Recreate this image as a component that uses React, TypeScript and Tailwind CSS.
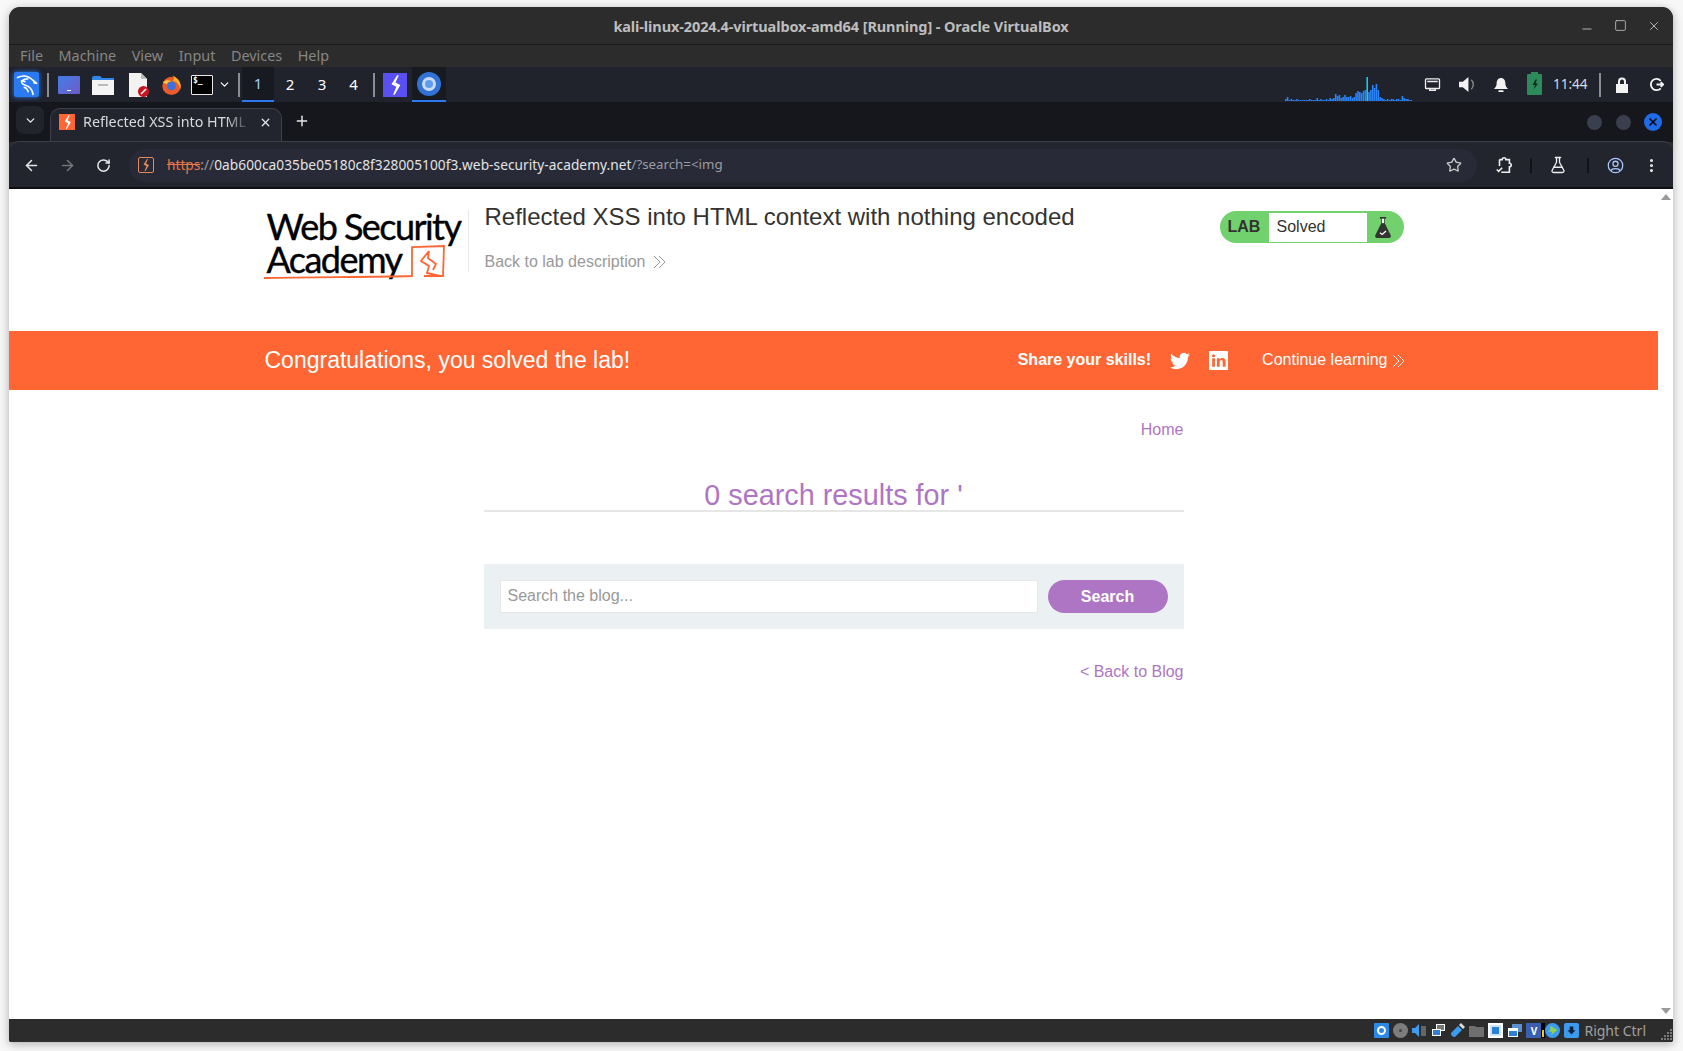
import React from 'react';
import { ArrowLeft, ArrowRight, ChevronDown, EllipsisVertical, FlaskConical, Plus, RotateCw, Star, X, Minus, Square } from 'lucide-react';

const graph = [2,4,1,2,1,1,2,1,1,1,1,1,1,2,1,1,1,3,1,2,1,1,2,1,3,2,3,7,5,6,3,4,6,4,4,5,3,4,8,10,9,8,10,11,24,9,11,16,13,17,11,4,3,2,1,2,1,2,2,1,2,2,1,5,3,2,2,1,1];

const Lightning = ({ className }: { className?: string }) => (
  <svg viewBox="0 0 16 24" className={className} fill="currentColor">
    <path d="M10 0 L3 11 L9 14 L5 24 L7 24 L14 12 L8 9 L12 0 Z" />
  </svg>
);

const Bolt = ({ className }: { className?: string }) => (
  <svg viewBox="0 0 24 24" className={className}>
    <path d="M13 2 L7 13 L12 13 L9 22 L18 10 L13 10 L16 2 Z" fill="currentColor" />
  </svg>
);

const Chevrons = ({ className }: { className?: string }) => (
  <svg viewBox="0 0 13 14" className={`w-[13px] h-[14px] ${className ?? ''}`} fill="none" stroke="currentColor" strokeWidth="1">
    <path d="M1 1 L7 7 L1 13 M6 1 L12 7 L6 13" />
  </svg>
);

const Logo = () => (
  <div className="relative w-[203px] h-[70px] font-['Lato',sans-serif] text-black">
    <div className="text-[36px] leading-[33px] font-normal tracking-[-1.55px] pl-[3px] whitespace-nowrap" style={{ WebkitTextStroke: '0.4px black' }}>
      <div>Web Security</div>
      <div>Academy</div>
    </div>
    <svg viewBox="0 0 203 70" className="absolute left-0 top-0 w-[203px] h-[70px] text-[#ff6633]" fill="none" stroke="currentColor">
      <path d="M0 68 C50 67 110 67 148 66 L148 37 L180 36 L179 66 L160 66" strokeWidth="1.8" />
      <path d="M165 41 L157 51 L165 56 L163 63 L176 66 M165 41 L164 48 L172 54 L169 60" strokeWidth="1.8" />
    </svg>
  </div>
);

const Flask = () => (
  <svg viewBox="0 0 20 24" className="w-[18px] h-[21px]">
    <rect x="6.500" y="0" width="7" height="2" fill="#333332" />
    <path d="M8 2 h4 v5 l7 14 q0 3 -2 3 h-14 q-2 0 -2 -3 l7 -14 z" fill="#333332" />
    <rect x="8.800" y="2" width="2.400" height="5" fill="#fff" />
    <path d="M6.500 18 l2.500 2 l4.500 -4" fill="none" stroke="#fff" strokeWidth="1.4" />
  </svg>
);

const Twitter = () => (
  <svg viewBox="0 0 24 24" className="w-[20px] h-[20px]" fill="#fff">
    <path d="M23.95 4.57a10 10 0 0 1-2.82.77 4.96 4.96 0 0 0 2.16-2.72c-.95.55-2 .95-3.12 1.18a4.92 4.92 0 0 0-8.38 4.48C7.69 8.1 4.07 6.13 1.64 3.16a4.82 4.82 0 0 0-.67 2.48c0 1.71.87 3.2 2.19 4.1a4.9 4.9 0 0 1-2.23-.62v.06a4.92 4.92 0 0 0 3.95 4.83 5 5 0 0 1-2.21.08 4.94 4.94 0 0 0 4.6 3.42A9.87 9.87 0 0 1 0 19.54a14 14 0 0 0 7.56 2.21c9.05 0 14-7.5 14-13.98 0-.21 0-.42-.02-.63a9.94 9.94 0 0 0 2.41-2.57z" />
  </svg>
);

const LinkedIn = () => (
  <svg viewBox="0 0 24 24" className="w-[19px] h-[19px]" fill="#fff">
    <path fillRule="evenodd" d="M1 0h22a1 1 0 0 1 1 1v22a1 1 0 0 1-1 1H1a1 1 0 0 1-1-1V1a1 1 0 0 1 1-1zM4 9v11h3.5V9zM5.75 4a2 2 0 1 0 0 4 2 2 0 0 0 0-4zM10 9v11h3.5v-6c0-1.6.7-2.5 2-2.5s1.8.9 1.8 2.5v6H21v-6.8c0-3-1.5-4.5-3.8-4.5-1.8 0-3 .9-3.6 2V9z" />
  </svg>
);

const TitleBar = () => (
  <div className="relative h-[38px] shrink-0 bg-[#2c2c2c] border-b border-[#1b1b1b] rounded-t-[11px] flex items-center justify-center">
    <span className="pt-[2px] text-[14.5px] font-bold text-[#bdbdbd] font-['Noto_Sans',sans-serif] tracking-[-0.1px]">kali-linux-2024.4-virtualbox-amd64 [Running] - Oracle VirtualBox</span>
    <div className="absolute right-[12px] top-0 h-full flex items-center gap-[20px] text-[#d0d0d0]">
      <Minus size={14} strokeWidth={1.4} className="translate-y-[3px]" />
      <Square size={13} strokeWidth={1.4} />
      <X size={14} strokeWidth={1.4} />
    </div>
  </div>
);

const MenuBar = () => (
  <div className="h-[22px] shrink-0 bg-[#2c2c2c] flex items-center gap-[15.5px] pl-[11px] text-[14.4px] text-[#868686] font-['Noto_Sans',sans-serif]">
    {['File', 'Machine', 'View', 'Input', 'Devices', 'Help'].map(m => <span key={m}>{m}</span>)}
  </div>
);

const PanelSep = ({ className }: { className?: string }) => <div className={`w-[2px] h-[24px] bg-[#8c8d92] shrink-0 ${className ?? ''}`} />;

const KaliPanel = () => (
  <div className="h-[35px] shrink-0 bg-[#20222c] flex items-center relative text-white">
    <div className="w-[25px] h-[25px] ml-[5px] rounded-[2px] bg-[#2a7bf2] shadow-[0_0_5px_#2a7bf2] flex items-center justify-center">
      <svg viewBox="0 0 24 24" className="w-[23px] h-[23px]" fill="none" stroke="#fff" strokeWidth="1.6">
        <path d="M2 5 C8 2 14 3 18 7 L23 11 L19 10 M14 6 C7 6 5 10 9 12 C15 14 18 16 19 23 M6 8 L11 9 M9 15 C11 15 13 17 14 20" />
      </svg>
    </div>
    <PanelSep className="ml-[8px]" />
    <div className="w-[22px] h-[18px] ml-[9px] rounded-[1px] bg-gradient-to-br from-[#3d7de6] to-[#6a5ac8] flex items-end justify-center">
      <span className="w-[4px] h-[1px] mb-[3px] bg-white" />
    </div>
    <svg viewBox="0 0 22 20" className="w-[22px] h-[20px] ml-[12px]">
      <path d="M0 3 q0 -2 2 -2 h6 l2 2 h12 v3 H0z" fill="#2f86e6" />
      <rect x="0" y="5" width="22" height="15" fill="#f4f4f4" />
      <rect x="6" y="9" width="10" height="2" fill="#bbb" />
    </svg>
    <svg viewBox="0 0 22 24" className="w-[22px] h-[24px] ml-[14px]">
      <path d="M1 0 h12 l6 6 v18 H1z" fill="#f2f2f2" />
      <path d="M13 0 l6 6 h-6z" fill="#bbb" />
      <circle cx="15.500" cy="18.500" r="5.500" fill="#c8141e" />
      <path d="M13 21 l5 -5" stroke="#fff" strokeWidth="1.6" />
    </svg>
    <svg viewBox="0 0 24 24" className="w-[21px] h-[22px] ml-[11px]">
      <circle cx="12" cy="13" r="10.500" fill="#ee5a2a" />
      <circle cx="12" cy="13" r="5" fill="#3b72e0" />
      <path d="M13 1 C20 4 24 10 22 17 C21 11 18 8 13 7 C16 5 15 3 13 1z" fill="#ffb028" />
      <path d="M2 9 C5 6 9 6 12 8 C8 8 7 10 7 11z" fill="#ffc53a" />
    </svg>
    <div className="w-[22px] h-[20px] ml-[9px] bg-black border border-[#e8e8e8] rounded-[1px] text-[8px] leading-[9px] pl-[1px] font-['DejaVu_Sans_Mono',monospace] font-bold">$_</div>
    <ChevronDown size={13} strokeWidth={2.2} className="ml-[5px]" />
    <PanelSep className="ml-[7px]" />
    <div className="ml-[2px] flex h-full items-center text-[15px] font-['Noto_Sans',sans-serif]">
      <span className="w-[32px] h-full flex items-center justify-center bg-[#181a22] border-b-2 border-[#2a7bf2] text-[#9fd0ff]">1</span>
      <span className="w-[32px] text-center">2</span>
      <span className="w-[32px] text-center">3</span>
      <span className="w-[31px] text-center">4</span>
    </div>
    <PanelSep className="ml-[4px]" />
    <div className="w-[24px] h-[24px] ml-[8px] bg-[#5a4ff0] flex items-center justify-center text-white"><Lightning className="w-[13px] h-[20px]" /></div>
    <div className="w-[34px] h-full ml-[5px] bg-[#181a22] border-b-2 border-[#2a7bf2] flex items-center justify-center">
      <div className="w-[24px] h-[24px] rounded-full bg-[#3272d6] flex items-center justify-center">
        <div className="w-[14px] h-[14px] rounded-full bg-[#5f9cec] border-[3px] border-[#c9dcf7]" />
      </div>
    </div>
    <svg viewBox="0 0 127 25" className="absolute left-[1276px] bottom-[1px] w-[127px] h-[25px]" fill="#2a84f5">
      {graph.map((h, i) => <rect key={i} x={i * 1.85} y={25 - h} width="1.6" height={h} fill={i === 44 ? '#12c8f5' : '#2a84f5'} />)}
    </svg>
    <div className="ml-auto flex items-center mr-[9px]">
      <svg viewBox="0 0 18 16" className="w-[17px] h-[14px]" fill="none" stroke="#eee" strokeWidth="1.5">
        <rect x="1" y="1" width="16" height="11" rx="1" />
        <path d="M3 4h12M5 14h8M6 12v2M12 12v2" />
      </svg>
      <svg viewBox="0 0 20 18" className="w-[19px] h-[17px] ml-[17px]">
        <path d="M1 6 h4 l6 -5 v16 l-6 -5 h-4z" fill="#f2f2f2" />
        <path d="M14 4 a7 7 0 0 1 0 10" fill="none" stroke="#888" strokeWidth="1.5" />
      </svg>
      <svg viewBox="0 0 16 18" className="w-[14px] h-[16px] ml-[17px]" fill="#f2f2f2">
        <path d="M8 1 c-3 0 -5 2.500 -5 6 c0 4 -2 5 -3 6.500 h16 c-1 -1.500 -3 -2.500 -3 -6.500 c0 -3.500 -2 -6 -5 -6z" />
        <rect x="5" y="15" width="6" height="2" rx="1" />
      </svg>
      <div className="relative ml-[19px] w-[15px] h-[21px] rounded-[1px] bg-[#2d8a5a] flex items-center justify-center">
        <span className="absolute -top-[2px] left-[4px] w-[7px] h-[2px] bg-[#2d8a5a]" />
        <Bolt className="w-[12px] h-[13px] text-[#0f2a1c]" />
      </div>
      <span className="ml-[11px] text-[13.5px] text-[#d7dbe0] font-['Noto_Sans',sans-serif] w-[35px]">11:44</span>
      <PanelSep className="ml-[11px]" />
      <svg viewBox="0 0 14 16" className="w-[14px] h-[16px] ml-[14px]" fill="#f2f2f2">
        <path fillRule="evenodd" d="M3 7 V4.500 a4 4 0 0 1 8 0 V7 h2 v9 H1 V7z M5 7 h4 V4.500 a2 2 0 0 0 -4 0z" />
      </svg>
      <svg viewBox="0 0 16 16" className="w-[15px] h-[15px] ml-[20px]" fill="none" stroke="#f2f2f2" strokeWidth="2">
        <path d="M12.500 4 A6 6 0 1 0 12.500 12 M8 8 h7 M12.500 5.500 L15 8 L12.500 10.500" />
      </svg>
    </div>
  </div>
);

const TabStrip = () => (
  <div className="h-[40px] shrink-0 bg-[#16171d] flex items-end relative">
    <div className="absolute left-[7px] top-[4px] w-[28px] h-[28px] rounded-[8px] bg-[#22242c] flex items-center justify-center text-[#e6e6e6]">
      <ChevronDown size={13} strokeWidth={2.6} />
    </div>
    <div className="ml-[41px] w-[232px] h-[34px] bg-[#22242e] border border-b-0 border-[#3d3f4b] rounded-t-[10px] flex items-center pl-[8px] pr-[9px] pb-[9px] pt-[2px]">
      <div className="w-[16px] h-[16px] bg-[#ff6633] flex items-center justify-center text-white shrink-0"><Lightning className="w-[9px] h-[14px]" /></div>
      <span className="ml-[8px] text-[14.3px] text-[#d8dade] font-['Noto_Sans',sans-serif] whitespace-nowrap overflow-hidden flex-1 [mask-image:linear-gradient(to_right,#000_85%,transparent)]">Reflected XSS into HTML</span>
      <X size={13} strokeWidth={2.4} className="ml-[8px] text-[#e6e6e6] shrink-0" />
    </div>
    <Plus size={16} strokeWidth={2.2} className="ml-[12px] mb-[13px] text-[#e6e6e6]" />
    <div className="absolute right-[11px] top-[11px] flex items-center gap-[12px]">
      <span className="w-[17px] h-[17px] rounded-full bg-[#3a3f4d] border border-[#14151a]" />
      <span className="w-[17px] h-[17px] rounded-full bg-[#3a3f4d] border border-[#14151a]" />
      <span className="w-[18px] h-[18px] rounded-full bg-[#1f6ce8] flex items-center justify-center"><X size={12} strokeWidth={3.5} className="text-[#0a0a14]" /></span>
    </div>
  </div>
);

const Toolbar = () => (
  <div className="h-[48px] shrink-0 bg-[#22242e] border-t border-[#3d3f4b] rounded-t-[10px] -mt-[1px] pt-[1px] flex items-center relative z-10 border-b-2 border-b-[#0e0f13]">
    <ArrowLeft size={17} strokeWidth={2.2} className="ml-[14px] text-[#e6e6e6]" />
    <ArrowRight size={17} strokeWidth={2.2} className="ml-[19px] text-[#73757c]" />
    <RotateCw size={15} strokeWidth={2.4} className="ml-[20px] text-[#e6e6e6]" />
    <div className="ml-[18px] w-[1348px] h-[33px] rounded-full bg-[#282b37] flex items-center pl-[9px] pr-[15px] font-['Noto_Sans',sans-serif] text-[13.7px]">
      <div className="w-[16px] h-[16px] border border-[#e8875a] rounded-[2px] flex items-center justify-center text-[#e8875a]"><Lightning className="w-[8px] h-[12px]" /></div>
      <span className="ml-[13px] text-[#e8764a] line-through">https</span>
      <span className="text-[#9a9ca3]">://</span>
      <span className="text-[#e2e3e6] tracking-[0.05px]">0ab600ca035be05180c8f328005100f3.web-security-academy.net</span>
      <span className="text-[#9a9ca3] text-[13.3px]">/?search=&lt;img</span>
      <Star size={16} strokeWidth={2} className="ml-auto text-[#c8c8c8]" />
    </div>
    <svg viewBox="0 0 20 20" className="w-[18px] h-[18px] ml-[18px]" fill="none" stroke="#eee" strokeWidth="1.8">
      <path d="M5 4 h3 a2 2 0 0 1 4 0 h4 v4 a2 2 0 0 1 0 4 v6 H7 M5 4 v7 M2 15 l2 2 l4 -4" />
    </svg>
    <div className="w-[2px] h-[15px] bg-[#111218] ml-[17px]" />
    <FlaskConical size={18} strokeWidth={1.8} className="ml-[17px] text-[#eee]" />
    <div className="w-[2px] h-[15px] bg-[#111218] ml-[20px]" />
    <svg viewBox="0 0 20 20" className="w-[17px] h-[17px] ml-[18px]" fill="none" stroke="#a9c7fa" strokeWidth="1.5">
      <circle cx="10" cy="10" r="8.500" />
      <circle cx="10" cy="8" r="3" />
      <path d="M4.500 16 c1.500 -3 9.500 -3 11 0" />
    </svg>
    <EllipsisVertical size={17} strokeWidth={2.4} className="ml-[19px] text-[#e6e6e6]" />
  </div>
);

const Scrollbar = () => (
  <div className="w-[15px] shrink-0 bg-white flex flex-col items-center justify-between py-[5px] pl-[1px]">
    <span className="w-0 h-0 border-x-[5px] border-x-transparent border-b-[6px] border-b-[#9b9b9b]" />
    <span className="w-0 h-0 border-x-[5px] border-x-transparent border-t-[6px] border-t-[#9b9b9b]" />
  </div>
);

const Page = () => (
  <div className="flex-1 min-h-0 flex bg-white font-['Liberation_Sans',sans-serif]">
    <div className="flex-1 min-w-0">
      <section className="h-[142px] w-[1140px] mx-auto flex items-start pt-[21px]">
        <Logo />
        <div className="w-px h-[62px] bg-[#e6e6e6] ml-[1px]" />
        <div className="ml-[16px] flex-1 -mt-[9px]">
          <h2 className="text-[24px] leading-[32px] text-[#333332]">Reflected XSS into HTML context with nothing encoded</h2>
          <div className="mt-[20px] flex items-center text-[16px] leading-[18px] text-[#999]">
            Back to lab description
            <Chevrons className="ml-[8px] text-[#999]" />
          </div>
        </div>
        <div className="mt-[1px] w-[184px] h-[32px] rounded-full bg-[#70d16d] flex items-center overflow-hidden shrink-0">
          <span className="w-[49px] pl-[8px] text-[16px] font-bold text-[#333332]">LAB</span>
          <span className="w-[98px] h-[29px] bg-white pl-[8px] text-[16px] leading-[28px] text-[#333332]">Solved</span>
          <span className="flex-1 flex justify-center pr-[4px]"><Flask /></span>
        </div>
      </section>
      <section className="h-[59px] bg-[#ff6633] text-white">
        <div className="w-[1140px] h-full mx-auto flex items-center">
          <h4 className="text-[23px] ml-[1px]">Congratulations, you solved the lab!</h4>
          <span className="ml-auto text-[16px] font-bold -translate-y-px">Share your skills!</span>
          <span className="ml-[19px]"><Twitter /></span>
          <span className="ml-[19px]"><LinkedIn /></span>
          <span className="ml-[34px] text-[16px] -translate-y-px">Continue learning</span>
          <Chevrons className="ml-[4px] -mr-[1px]" />
        </div>
      </section>
      <section className="w-[700px] mx-auto text-[#ae75c5] text-[16px]">
        <div className="pt-[31px] text-right leading-[18px]">Home</div>
        <h1 className="mt-[39px] h-[34px] text-center text-[28.8px] leading-[35px] border-b-2 border-[#e6e6e6] text-[#ae75c5]">0 search results for '</h1>
        <div className="mt-[52px] h-[65px] bg-[#ebf0f2] flex items-center pl-[16px] pr-[16px]">
          <div className="w-[538px] h-[33px] bg-white border border-[#e6e6e6] pl-[7px] leading-[29px] text-[#999]">Search the blog...</div>
          <button className="ml-[10px] w-[120px] h-[33px] rounded-full bg-[#ae75c5] text-white font-bold leading-[30px]">Search</button>
        </div>
        <div className="mt-[34px] text-right leading-[18px]">&lt; Back to Blog</div>
      </section>
    </div>
    <Scrollbar />
  </div>
);

const Sq = ({ className, children }: { className?: string; children?: React.ReactNode }) => (
  <div className={`w-[15px] h-[15px] shrink-0 flex items-center justify-center ${className ?? ''}`}>{children}</div>
);

const StatusBar = () => (
  <div className="h-[23px] shrink-0 bg-[#2c2c2c] rounded-b-[2px] flex items-center justify-end relative pr-[27px]">
    <div className="flex items-center gap-[4px]">
      <Sq className="bg-[#2a8ae6] rounded-[1px]"><span className="w-[9px] h-[9px] rounded-full border-2 border-white" /></Sq>
      <Sq className="bg-[#7d7d7d] rounded-full"><span className="w-[3px] h-[3px] rounded-full bg-[#444]" /></Sq>
      <Sq><svg viewBox="0 0 15 15" className="w-[15px] h-[15px]"><path d="M0 5h3l4-4v13l-4-4H0z" fill="#3d9bef" /><rect x="9" y="3" width="5" height="10" fill="#666" /></svg></Sq>
      <Sq><svg viewBox="0 0 15 15" className="w-[15px] h-[15px]"><rect x="5" y="1" width="9" height="7" fill="#fff" /><rect x="6" y="2" width="7" height="5" fill="#777" /><rect x="1" y="6" width="9" height="7" fill="#fff" /><rect x="2" y="7" width="7" height="5" fill="#2f7fd6" /></svg></Sq>
      <Sq><svg viewBox="0 0 15 15" className="w-[15px] h-[15px]"><path d="M1 10 L8 3 L12 7 L5 14 Q1 14 1 10z" fill="#3d9bef" /><path d="M9 2 L11 0 L15 4 L13 6z" fill="#ddd" /></svg></Sq>
      <Sq><svg viewBox="0 0 15 15" className="w-[15px] h-[15px]"><path d="M0 3h6l1 1h8v10H0z" fill="#6f6f6f" /></svg></Sq>
      <Sq className="bg-[#fff] p-[2px]"><span className="w-full h-full bg-[#2a7fd6] border-2 border-[#cfe3f7]" /></Sq>
      <Sq><svg viewBox="0 0 15 15" className="w-[15px] h-[15px]"><rect x="5" y="1" width="10" height="8" fill="#5b8fd0" /><rect x="1" y="5" width="10" height="9" fill="#fff" /><rect x="2" y="8" width="8" height="5" fill="#2a7fd6" /></svg></Sq>
      <Sq className="bg-[#3a5fb0] text-white text-[10px] font-bold leading-none relative">V<span className="absolute -right-[4px] top-0 w-[4px] h-[15px] bg-black"><span className="absolute bottom-[1px] left-[1px] w-[2px] h-[7px] bg-[#f2c811]" /></span></Sq>
      <Sq className="bg-[#3d9bef] rounded-full"><svg viewBox="0 0 15 15" className="w-[13px] h-[13px]"><path d="M5 2 l8 5 l-7 6 l1 -4 H3 l2 -3z" fill="#8fd14f" /></svg></Sq>
      <Sq className="bg-[#3d9bef] rounded-[2px]"><svg viewBox="0 0 15 15" className="w-[11px] h-[11px]"><path d="M5 2h5v5h3l-5.500 6L2 7h3z" fill="#12233f" /></svg></Sq>
    </div>
    <span className="ml-[5px] text-[14px] text-[#a0a0a0] font-['Noto_Sans',sans-serif] leading-none whitespace-nowrap">Right Ctrl</span>
    <svg viewBox="0 0 12 12" className="absolute right-0 bottom-[1px] w-[12px] h-[12px]" fill="#7a7a7a">
      <rect x="9" y="0" width="2" height="2" /><rect x="6" y="3" width="2" height="2" /><rect x="9" y="3" width="2" height="2" />
      <rect x="3" y="6" width="2" height="2" /><rect x="6" y="6" width="2" height="2" /><rect x="9" y="6" width="2" height="2" />
      <rect x="0" y="9" width="2" height="2" /><rect x="3" y="9" width="2" height="2" /><rect x="6" y="9" width="2" height="2" /><rect x="9" y="9" width="2" height="2" />
    </svg>
  </div>
);

export default function App() {
  return (
    <div className="w-[1683px] h-[1051px] bg-[#f7f7f7] pt-[7px] pl-[9px] pr-[10px] pb-[9px] overflow-hidden">
      <div className="h-full flex flex-col overflow-hidden rounded-t-[11px] rounded-b-[2px] shadow-[0_2px_10px_rgba(0,0,0,0.3)] bg-[#2c2c2c]">
        <TitleBar />
        <MenuBar />
        <KaliPanel />
        <TabStrip />
        <Toolbar />
        <Page />
        <StatusBar />
      </div>
    </div>
  );
}
